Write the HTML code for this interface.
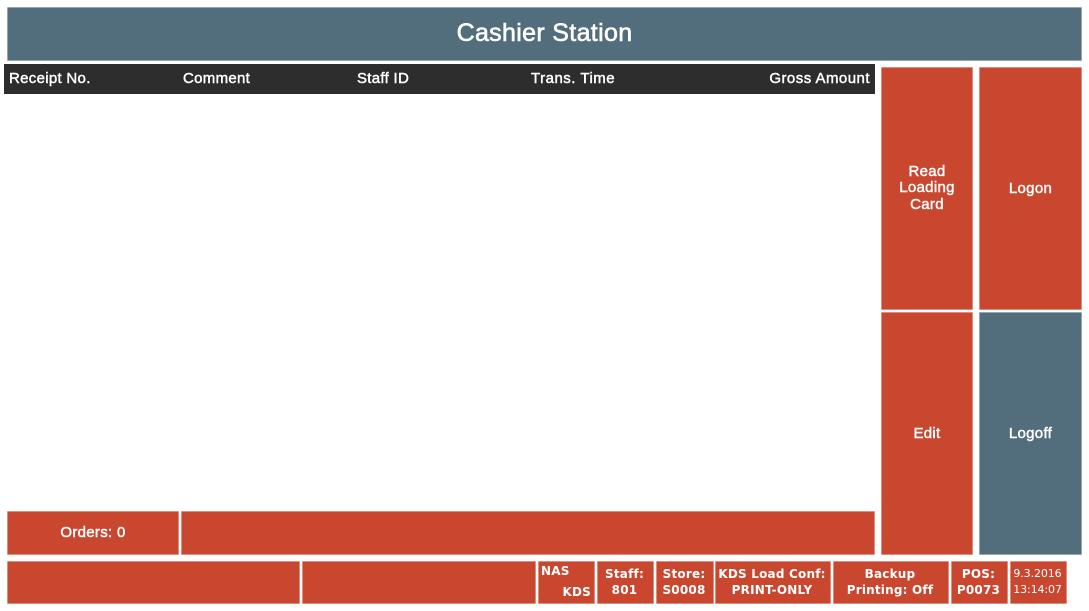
<!DOCTYPE html>
<html>
<head>
<meta charset="utf-8">
<style>
html,body{margin:0;padding:0;background:#fff;}
body{width:1089px;height:611px;position:relative;overflow:hidden;font-family:"Liberation Sans",Arial,sans-serif;color:#fff;}
.b{position:absolute;box-sizing:border-box;background:#c9472f;border:1px solid #e08c7d;border-radius:1px;display:flex;align-items:center;justify-content:center;text-align:center;font-size:15px;line-height:16.5px;letter-spacing:.3px;-webkit-text-stroke:.45px #fff;padding-top:1px;}
.s{background:#526d7b;border-color:#94a7b1;}
.h{position:absolute;top:64px;left:4px;width:871px;height:30px;background:#2d2d2d;}
.h span{position:absolute;top:6px;font-size:15px;line-height:17px;white-space:nowrap;letter-spacing:.3px;-webkit-text-stroke:.45px #fff;}
.v{font-family:"DejaVu Sans",Verdana,sans-serif;font-weight:bold;font-size:12px;line-height:16px;letter-spacing:.2px;-webkit-text-stroke:0;white-space:nowrap;padding-top:0;padding-bottom:1px;padding-right:2px;}
</style>
</head>
<body>
<div class="b s" style="left:7px;top:7px;width:1075px;height:54px;font-size:25px;line-height:26px;letter-spacing:.33px;-webkit-text-stroke:.6px #fff;padding-top:0;padding-bottom:3px;">Cashier Station</div>
<div class="h">
<span style="left:5px">Receipt No.</span>
<span style="left:179px">Comment</span>
<span style="left:353px">Staff ID</span>
<span style="left:527px;letter-spacing:.5px">Trans. Time</span>
<span style="right:5px;letter-spacing:.47px">Gross Amount</span>
</div>
<div class="b" style="left:881px;top:67px;width:92px;height:243px;padding-top:0;">Read<br>Loading<br>Card</div>
<div class="b" style="left:979px;top:67px;width:103px;height:243px;">Logon</div>
<div class="b" style="left:881px;top:312px;width:92px;height:243px;">Edit</div>
<div class="b s" style="left:979px;top:312px;width:103px;height:243px;">Logoff</div>
<div class="b" style="left:7px;top:511px;width:172px;height:44px;padding-top:0;">Orders: 0</div>
<div class="b" style="left:181px;top:511px;width:694px;height:44px;"></div>
<div class="b" style="left:7px;top:561px;width:293px;height:43px;"></div>
<div class="b" style="left:302px;top:561px;width:234px;height:43px;"></div>
<div class="b v" style="left:538px;top:561px;width:57px;height:43px;display:block;padding:0;">
<span style="position:absolute;left:2px;top:1px;">NAS</span>
<span style="position:absolute;right:3px;top:22px;">KDS</span>
</div>
<div class="b v" style="left:597px;top:561px;width:57px;height:43px;">Staff:<br>801</div>
<div class="b v" style="left:656px;top:561px;width:58px;height:43px;">Store:<br>S0008</div>
<div class="b v" style="left:715px;top:561px;width:116px;height:43px;">KDS Load Conf:<br>PRINT-ONLY</div>
<div class="b v" style="left:833px;top:561px;width:116px;height:43px;">Backup<br>Printing: Off</div>
<div class="b v" style="left:951px;top:561px;width:57px;height:43px;">POS:<br>P0073</div>
<div class="b v" style="left:1010px;top:561px;width:57px;height:43px;font-weight:normal;font-size:11px;letter-spacing:-.1px;">9.3.2016<br>13:14:07</div>
</body>
</html>
